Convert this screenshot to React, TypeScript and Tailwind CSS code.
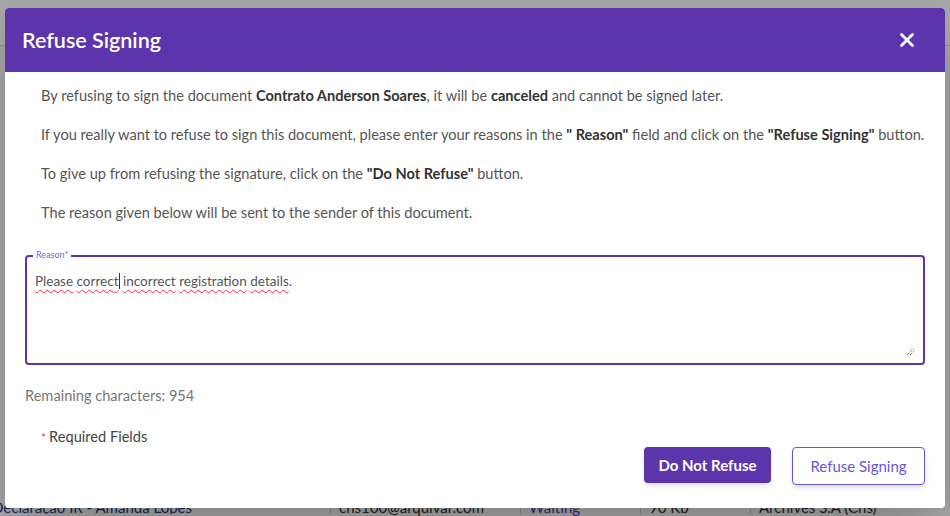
import { X } from 'lucide-react';

const words = ['Please', 'correct', 'incorrect', 'registration', 'details'];

const App = () => {
  return (
    <div className="relative w-[950px] h-[516px] overflow-hidden bg-[#f3f3f3] text-[#333]" style={{ fontFamily: 'Lato, "Open Sans", sans-serif' }}>
      {/* page behind the dialog */}
      <div className="flex flex-col h-full">
        <div className="h-[46px] bg-white border-b border-[#ddd]" />
        <div className="flex-1 bg-[#fafafa]" />
        <div className="grid grid-cols-[330px_190px_120px_110px_1fr] h-[16px] items-start text-[15px] leading-[14px] bg-white overflow-hidden">
          <span className="-ml-[8px] text-[#1f3b8a] overflow-hidden">Declaração IR - Amanda Lopes</span>
          <span className="border-l border-[#ccc] pl-2">chs100@arquivar.com</span>
          <span className="border-l border-[#ccc] pl-2 text-[#5c35ad]">Waiting</span>
          <span className="border-l border-[#ccc] pl-2">90 Kb</span>
          <span className="border-l border-[#ccc] pl-2">Archives S.A (Chs)</span>
        </div>
      </div>

      {/* overlay */}
      <div className="absolute inset-0 bg-black/35" />

      {/* dialog */}
      <div className="absolute left-[5px] top-[8px] w-[940px] h-[500px] bg-white rounded-[4px] shadow-2xl overflow-hidden flex flex-col">
        <div className="h-[64px] shrink-0 bg-[#5c35ad] flex items-center justify-between pl-[17px] pr-[27px]">
          <h2 className="text-white text-[21.5px] font-semibold">Refuse Signing</h2>
          <X className="text-white w-[22px] h-[22px]" strokeWidth={3} />
        </div>

        <div className="pl-[36px] pr-2 pt-[14px] text-[14.6px] text-[#555] flex flex-col gap-[19px] leading-[20px]">
          <p>By refusing to sign the document <b className="text-[#333]">Contrato Anderson Soares</b>, it will be <b className="text-[#333]">canceled</b> and cannot be signed later.</p>
          <p className="whitespace-nowrap">If you really want to refuse to sign this document, please enter your reasons in the <b className="text-[#333]">" Reason"</b> field and click on the <b className="text-[#333]">"Refuse Signing"</b> button.</p>
          <p>To give up from refusing the signature, click on the <b className="text-[#333]">"Do Not Refuse"</b> button.</p>
          <p>The reason given below will be sent to the sender of this document.</p>
        </div>

        {/* reason textarea */}
        <div className="relative mx-[20px] mt-[32px] h-[110px] shrink-0 border-2 border-[#5c35ad] rounded-[4px] px-[8px]">
          <span className="absolute left-[6px] -top-[7px] bg-white px-[3px] text-[9px] leading-[10px] text-[#7f5fd0]">Reason*</span>
          <p className="text-[13.5px] text-[#555] mt-[15px] leading-[18px]">
            {words.map((w, i) => (
              <span key={w}>
                <span className="underline decoration-wavy decoration-red-500 decoration-1 underline-offset-[3px]">
                  {w === 'correct' ? (<>correc<span className="border-r border-[#333]">t</span></>) : w}
                </span>
                {i < words.length - 1 ? ' ' : '.'}
              </span>
            ))}
          </p>
          <svg className="absolute right-[8px] bottom-[7px]" width="9" height="9" viewBox="0 0 9 9">
            <path d="M1 8 L8 1 M4 8 L8 4" stroke="#444" strokeWidth="1" strokeDasharray="1 1" />
          </svg>
        </div>

        <p className="ml-[20px] mt-[20px] text-[14.6px] text-[#777]">Remaining characters: 954</p>

        <div className="flex items-start justify-between pl-[36px] pr-[20px] mt-[19px]">
          <p className="text-[14.6px] text-[#444]"><span className="text-red-500 text-[12px] mr-[3px]">*</span>Required Fields</p>
          <div className="flex gap-[21px] mt-[21px]">
            <button className="w-[127px] h-[36px] bg-[#5c35ad] text-white text-[15px] font-bold rounded-[4px] shadow-md">Do Not Refuse</button>
            <button className="w-[133px] h-[38px] bg-white border border-[#6d51d6] text-[#6b55d3] text-[15px] rounded-[4px] shadow-md">Refuse Signing</button>
          </div>
        </div>
      </div>
    </div>
  );
};

export default App;
